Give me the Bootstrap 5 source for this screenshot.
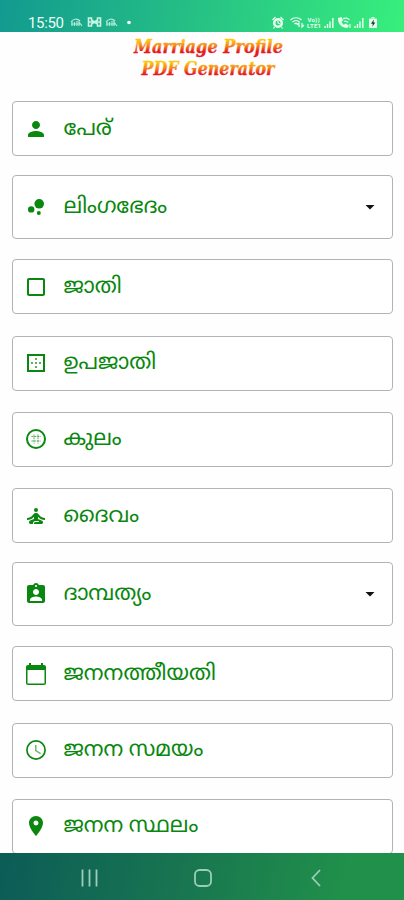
<!DOCTYPE html>
<html lang="ml">
<head>
<meta charset="utf-8">
<meta name="viewport" content="width=device-width, initial-scale=1">
<title>Marriage Profile PDF Generator</title>
<link href="https://cdn.jsdelivr.net/npm/bootstrap@5.3.0/dist/css/bootstrap.min.css" rel="stylesheet">
<style>
body{height:900px;overflow:hidden;background:#fefefe;font-family:Roboto,"Noto Sans Malayalam","Noto Sans",sans-serif}
.status{height:32px;padding:12px 24px 0 28px;background:linear-gradient(100deg,#129a90 0%,#26c085 48%,#38ef7d 100%);color:#e9fff4}
.clock{font-size:15px;line-height:22px;letter-spacing:-.35px}
.title{height:69px;padding-top:4px}
.title text{font:italic 700 17.8px "DejaVu Serif Condensed","DejaVu Serif",serif;font-stretch:condensed;stroke:url(#fire);stroke-width:.3px}
.field{height:55px;border:1px solid #b3b3b3;border-radius:4px;margin:0 11px 21.25px 12px;padding-left:11px;background:#fff;color:#0a870f;flex:none}
.field.pick{height:64px;margin-top:-2px;margin-bottom:20px;padding-right:10px}
.field svg{flex:none;fill:#0a870f}
.field svg.caret{fill:#111}
.label{font-size:21.7px;font-weight:400;line-height:28px;margin:-2px 0 0 15.5px;white-space:nowrap}
.sys{height:47px;background:linear-gradient(100deg,#0c5c57 0%,#187550 45%,#20904a 85%)}
</style>
</head>
<body class="d-flex flex-column">
<header class="status d-flex justify-content-between flex-shrink-0">
<div class="d-flex"><span class="clock">15:50</span>
<svg class="ms-1" width="68" height="20" viewBox="0 0 68 20" fill="none" stroke="#c9f5e4" stroke-width="1.2"><path d="M3 10c2-3 6-4 9-1M4 14V9M6.500 14v-4M9 14v-5M11 14v-4l3 4M3 12h9M38 10c2-3 6-4 9-1M39 14V9M41.500 14v-4M44 14v-5M46 14v-4l3 4M38 12h9" opacity=".85"/><path d="M20.500 6h3v2l3 2 3-2V6h3v8h-3v-2l-3-2-3 2v2h-3zM21 10h11" stroke-width="1.600"/><circle cx="61" cy="10.500" r="1.800" fill="#fff" stroke="none"/></svg></div>
<svg width="112" height="20" viewBox="268 12 112 20" fill="none" stroke="#e4ffed" stroke-width="1.200"><circle cx="278" cy="23" r="3.800" stroke-width="2.600"/><path d="M278 20.500V23l2 1M272.500 20l3-3M283.500 20l-3-3M274.500 27l-1 1.500M281.500 27l1 1.500"/><path d="M290.500 20c3-3 8-3 11 0M292.500 22c2-2 5-2 7 0M294.500 24c1-1 2-1 3 0M299 27v-4l-2 2M302 23v4l2-2" /><g fill="#e4ffed" stroke="none" font-family="Roboto, sans-serif" font-weight="700" font-size="6"><text x="307.500" y="22" textLength="12">Vo))</text><text x="307" y="28" textLength="14">LTE1</text></g><path d="M325 28v-2M327.500 28v-4M330 28v-6.500M332.800 28V18M355 28v-2M357.500 28v-4M360 28v-6.500M362.800 28V18" stroke-width="1.500"/><path d="M338 18c-.5 6 4 10 9.500 10l1.500-2.500-3.500-2-1.500 1.200c-1.200-.7-2.200-2-2.500-3l1.500-1.200-1.500-3.500z" fill="#e4ffed" stroke="none"/><path d="M343 19c2-1.500 5-1 6.500 1M344 21.500c1.500-.8 3 0 4 1M350 24v4"/><rect x="369" y="18.500" width="8" height="9.500" rx="1" fill="#e4ffed" stroke="none"/><path d="M371.500 17.700h3"/><path d="M373.800 19.500 371 23.700h1.800l-.5 3 3-4.300h-1.800z" fill="#123a28" stroke="none"/></svg>
</header>
<h1 class="title m-0 text-center flex-shrink-0">
<svg class="d-block mx-auto" width="404" height="48" viewBox="0 36 404 48"><defs><linearGradient id="fire" x1="0" y1="0" x2="0" y2="1"><stop offset=".2" stop-color="#fbc810"/><stop offset=".48" stop-color="#f5801e"/><stop offset=".74" stop-color="#e51a1a"/></linearGradient></defs><g fill="url(#fire)"><text x="134" y="53" textLength="149" lengthAdjust="spacingAndGlyphs">Marriage Profile</text><text x="141.500" y="75.300" textLength="133" lengthAdjust="spacingAndGlyphs">PDF Generator</text></g></svg></h1>
<main class="flex-grow-1 overflow-hidden d-flex flex-column">
<div class="field d-flex align-items-center"><svg width="24" height="24" viewBox="0 0 24 24"><path d="M12 12c2.200 0 4-1.800 4-4s-1.800-4-4-4-4 1.800-4 4 1.800 4 4 4m0 2c-2.700 0-8 1.300-8 4v2h16v-2c0-2.700-5.300-4-8-4"/></svg><span class="label">പേര്</span></div>
<div class="field pick d-flex align-items-center"><svg width="24" height="24" viewBox="0 0 24 24"><circle cx="7.200" cy="14.400" r="3.200"/><circle cx="14.800" cy="18" r="2"/><circle cx="15.200" cy="8.800" r="4.800"/></svg><span class="label">ലിംഗഭേദം</span><svg class="caret ms-auto" width="24" height="24" viewBox="0 0 24 24"><path d="M7.500 10h9L12 14.500z"/></svg></div>
<div class="field d-flex align-items-center"><svg width="24" height="24" viewBox="0 0 24 24"><path d="M19 5v14H5V5zm0-2H5c-1.100 0-2 .9-2 2v14c0 1.100.9 2 2 2h14c1.100 0 2-.9 2-2V5c0-1.100-.9-2-2-2"/></svg><span class="label">ജാതി</span></div>
<div class="field d-flex align-items-center"><svg width="24" height="24" viewBox="0 0 24 24"><path d="M3 3v18h18V3zm16 16H5V5h14z"/><path d="M11 7h2v2h-2zM11 11h2v2h-2zM11 15h2v2h-2zM7 11h2v2H7zM15 11h2v2h-2z" opacity=".65"/></svg><span class="label">ഉപജാതി</span></div>
<div class="field d-flex align-items-center"><svg width="24" height="24" viewBox="0 0 24 24"><circle cx="12" cy="12" r="9" fill="none" stroke="#0a870f" stroke-width="2"/><path d="M7.500 9.500h9M7.500 14h9M10 7.500v9M14 7.500v9" stroke="#0a870f" stroke-width="1" stroke-dasharray="2 .7" opacity=".65"/></svg><span class="label">കുലം</span></div>
<div class="field d-flex align-items-center"><svg width="24" height="24" viewBox="0 0 24 24"><circle cx="12" cy="6" r="2"/><path d="M21 16v-2c-2.240 0-4.160-.96-5.600-2.680l-1.340-1.600C13.680 9.260 13.120 9 12.530 9h-1.050c-.6 0-1.150.26-1.530.72l-1.340 1.600C7.160 13.040 5.240 14 3 14v2c2.770 0 5.190-1.170 7-3.250V15l-3.880 1.550C5.450 16.820 5 17.480 5 18.210 5 19.200 5.800 20 6.790 20H9v-.5a2.500 2.500 0 0 1 2.500-2.500h3c.28 0 .5.220.5.500s-.22.500-.5.500h-3c-.83 0-1.500.67-1.500 1.500v.5h7.100c.85 0 1.650-.5 1.860-1.320.2-.8-.22-1.540-.91-1.810L14 15v-2.250c1.810 2.080 4.230 3.250 7 3.250"/></svg><span class="label">ദൈവം</span></div>
<div class="field pick d-flex align-items-center"><svg width="24" height="24" viewBox="0 0 24 24"><path d="M19 3h-4.180C14.400 1.840 13.300 1 12 1s-2.400.84-2.820 2H5c-1.100 0-2 .9-2 2v14c0 1.100.9 2 2 2h14c1.100 0 2-.9 2-2V5c0-1.100-.9-2-2-2m-7 0c.55 0 1 .45 1 1s-.45 1-1 1-1-.45-1-1 .45-1 1-1m0 4c1.660 0 3 1.340 3 3s-1.340 3-3 3-3-1.340-3-3 1.340-3 3-3m6 12H6v-1.400c0-2 4-3.100 6-3.100s6 1.100 6 3.100z"/></svg><span class="label">ദാമ്പത്യം</span><svg class="caret ms-auto" width="24" height="24" viewBox="0 0 24 24"><path d="M7.500 10h9L12 14.500z"/></svg></div>
<div class="field d-flex align-items-center"><svg width="24" height="24" viewBox="0 0 24 24"><path fill-rule="evenodd" d="M20 3h-1V1h-2v2H7V1H5v2H4c-1.100 0-2 .9-2 2v16c0 1.100.9 2 2 2h16c1.100 0 2-.9 2-2V5c0-1.100-.9-2-2-2m.5 18.500h-17V8h17z"/></svg><span class="label">ജനനത്തീയതി</span></div>
<div class="field d-flex align-items-center"><svg width="24" height="24" viewBox="0 0 24 24"><circle cx="12" cy="12" r="9.100" fill="none" stroke="#0a870f" stroke-width="1.700"/><path d="M11 7h1.500v5.200l4.500 2.700-.8 1.300L11 13z" opacity=".6"/></svg><span class="label">ജനന സമയം</span></div>
<div class="field d-flex align-items-center"><svg width="24" height="24" viewBox="0 0 24 24"><path d="M12 2C8.130 2 5 5.130 5 9c0 5.250 7 13 7 13s7-7.750 7-13c0-3.870-3.130-7-7-7m0 9.500a2.500 2.500 0 0 1 0-5 2.500 2.500 0 0 1 0 5"/></svg><span class="label">ജനന സ്ഥലം</span></div>
</main>
<nav class="sys flex-shrink-0"><svg class="d-block" width="404" height="47" viewBox="0 853 404 47" fill="none" stroke="#9ccdb9" stroke-width="1.800"><path d="M82.500 869.500v17M89.500 869.500v17M96.500 869.500v17"/><rect x="195" y="870" width="16" height="16" rx="4.500"/><path d="M320 870l-7.500 8 7.500 8"/></svg></nav>
<script src="https://cdn.jsdelivr.net/npm/bootstrap@5.3.0/dist/js/bootstrap.bundle.min.js"></script>
</body>
</html>
